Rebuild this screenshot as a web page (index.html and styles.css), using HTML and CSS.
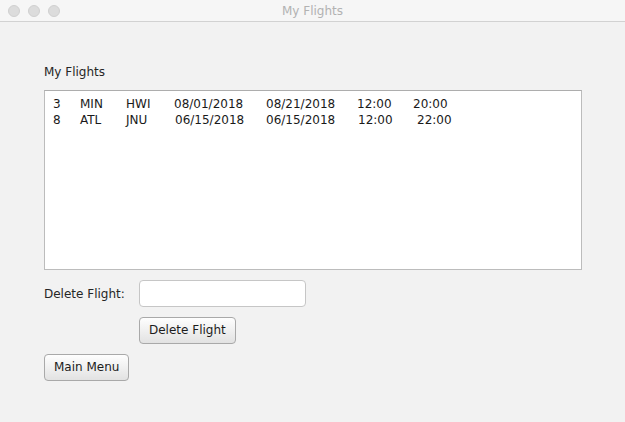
FILE: index.html
```html
<!DOCTYPE html>
<html>
<head>
<meta charset="utf-8">
<title>My Flights</title>
<link rel="stylesheet" href="styles.css">
</head>
<body>
<div class="window">
  <div class="titlebar">
    <div class="lights">
      <span class="light"></span>
      <span class="light"></span>
      <span class="light"></span>
    </div>
    <div class="title">My Flights</div>
  </div>
  <div class="content">
    <div class="heading">My Flights</div>
    <div class="list">
      <div class="row">
        <span>3</span><span>MIN</span><span>HWI</span><span>08/01/2018</span><span>08/21/2018</span><span>12:00</span><span>20:00</span>
      </div>
      <div class="row">
        <span>8</span><span>ATL</span><span>JNU</span><span class="n1">06/15/2018</span><span>06/15/2018</span><span class="n1">12:00</span><span class="n4">22:00</span>
      </div>
    </div>
    <div class="form-row">
      <label class="field-label" for="flight">Delete Flight:</label>
      <input class="field" id="flight" type="text">
    </div>
    <div class="action-row">
      <button class="btn">Delete Flight</button>
    </div>
    <div class="menu-row">
      <button class="btn">Main Menu</button>
    </div>
  </div>
</div>
</body>
</html>
```

FILE: styles.css
```css
* { box-sizing: border-box; }

html, body {
  margin: 0;
  padding: 0;
  background: #f2f2f2;
  font-family: "DejaVu Sans", "Liberation Sans", sans-serif;
  font-size: 12px;
  color: #222;
}

.window {
  width: 625px;
  height: 422px;
  display: flex;
  flex-direction: column;
}

.titlebar {
  position: relative;
  height: 22px;
  background: #f6f6f6;
  border-bottom: 1px solid #d2d2d2;
  display: flex;
  justify-content: center;
  padding-top: 2px;
}

.lights {
  position: absolute;
  left: 8px;
  top: 5px;
  display: flex;
  gap: 8px;
}

.light {
  width: 12px;
  height: 12px;
  border-radius: 50%;
  background: #dcdcdc;
  border: 1px solid #d0d0d0;
}

.title {
  line-height: 19px;
  color: #b2b2b2;
}

.content {
  padding: 42px 43px 0 44px;
  display: flex;
  flex-direction: column;
}

.heading {
  line-height: 16px;
  color: #262626;
}

.list {
  margin-top: 10px;
  height: 180px;
  background: #fff;
  border: 1px solid #bcbcbc;
  border-top-color: #adadad;
  padding: 5px 0 0 8px;
  color: #1a1a1a;
}

.row {
  display: grid;
  grid-template-columns: 27px 46px 48px 92px 91px 56px auto;
  line-height: 16px;
}

.n1 { padding-left: 1px; }
.n4 { padding-left: 4px; }

.form-row {
  margin-top: 10px;
  display: flex;
  align-items: center;
}

.field-label {
  width: 95px;
  color: #262626;
}

.field {
  width: 167px;
  height: 27px;
  margin: 0;
  background: #fff;
  border: 1px solid #c6c6c6;
  border-radius: 4px;
  font: inherit;
  padding: 0 4px;
  outline: none;
}

.action-row {
  margin-top: 10px;
  padding-left: 95px;
  display: flex;
}

.menu-row {
  margin-top: 10px;
  display: flex;
}

.btn {
  height: 27px;
  margin: 0;
  padding: 0 9px;
  font: inherit;
  color: #1c1c1c;
  border: 1px solid #a9a9a9;
  border-radius: 4px;
  background: linear-gradient(#fefefe, #e2e2e2);
  line-height: 25px;
}
```
